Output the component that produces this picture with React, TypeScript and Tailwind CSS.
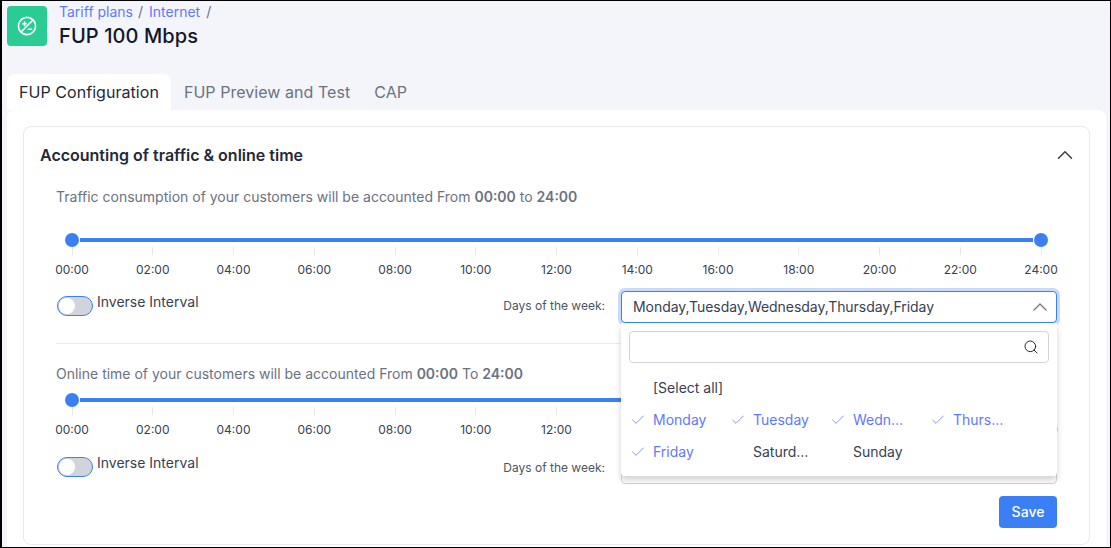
import { Check, ChevronUp, Search } from 'lucide-react';

const hours = ['00:00', '02:00', '04:00', '06:00', '08:00', '10:00', '12:00', '14:00', '16:00', '18:00', '20:00', '22:00', '24:00'];
const days = [
  { name: 'Monday', on: true },
  { name: 'Tuesday', on: true },
  { name: 'Wednesday', on: true },
  { name: 'Thursday', on: true },
  { name: 'Friday', on: true },
  { name: 'Saturday', on: false },
  { name: 'Sunday', on: false },
];

function TimeSlider() {
  return (
    <div className="px-4">
      <div className="relative h-[14px]">
        <div className="absolute left-[8px] right-[8px] top-[5px] h-1 bg-[#3b7ff5]" />
        <div className="absolute left-[-7px] top-0 h-[14px] w-[14px] rounded-full bg-[#3b7ff5]" />
        <div className="absolute right-[-7px] top-0 h-[14px] w-[14px] rounded-full bg-[#3b7ff5]" />
      </div>
      <div className="flex justify-between">
        {hours.map(h => (
          <div key={h} className="flex w-0 flex-col items-center">
            <div className="h-[8px] w-px shrink-0 bg-[#e5e7eb]" />
            <div className="mt-[7px] text-xs leading-4 text-[#374151]">{h}</div>
          </div>
        ))}
      </div>
    </div>
  );
}

function OptionsRow({ daysClass }: { daysClass: string }) {
  return (
    <div className="flex items-center justify-between">
      <div className="mb-[2px] flex items-start">
        <div className="ml-px flex h-5 w-9 items-center rounded-full border border-[#3b7ff5] bg-[#d1d5db] px-px">
          <div className="h-4 w-4 rounded-full bg-white" />
        </div>
        <span className="-mt-[2px] ml-1 text-sm leading-4 text-[#374151]">Inverse Interval</span>
      </div>
      <div className="flex items-center">
        <span className={`mr-4 text-xs text-[#4b5563] ${daysClass}`}>Days of the week:</span>
        <div className="h-8 w-[436px] rounded border border-[#d1d5db] bg-white" />
      </div>
    </div>
  );
}

export default function App() {
  return (
    <div className="relative h-[548px] w-[1111px] overflow-hidden border border-l-2 border-black bg-[#f4f5fb] font-['Inter',sans-serif]">
      <div className="flex items-start pl-[5px] pt-[5px]">
        <div className="flex h-10 w-10 items-center justify-center rounded bg-[#2bcc94]">
          <svg width="22" height="22" viewBox="0 0 22 22" fill="none" stroke="white" strokeWidth="1.6" strokeLinecap="round">
            <circle cx="11" cy="11" r="8.6" />
            <path d="M5 17 17 5" />
            <path d="M6.8 8.8h3.4M8.5 7.1v3.4" />
            <path d="M12.4 14.2h3.2" />
          </svg>
        </div>
        <div className="-mt-px ml-3">
          <div className="flex h-[14px] items-center text-sm text-[#6478f5]">
            <span>Tariff plans</span>
            <span className="ml-[5px] mr-[6px] text-[#6b7280]">/</span>
            <span>Internet</span>
            <span className="mx-[6px] text-[#6b7280]">/</span>
          </div>
          <div className="mt-[3px] text-xl font-medium leading-7 tracking-[0.1px] text-[#111827]">FUP 100 Mbps</div>
        </div>
      </div>

      <div className="ml-[5px] mt-[24px] flex h-9 items-center text-base tracking-[0.05px]">
        <div className="flex h-9 items-center rounded-t-lg bg-white px-3 text-[#1f2937]">FUP Configuration</div>
        <div className="ml-[13px] text-[#6b7280]">FUP Preview and Test</div>
        <div className="ml-6 text-[#6b7280]">CAP</div>
      </div>

      <div className="ml-[5px] h-[500px] w-[1099px] rounded-t-lg bg-white px-4 pt-4">
        <div className="h-[419px] w-[1067px] rounded-lg border border-[#e9eaee] px-8">
          <div className="-mx-4 mb-[5px] flex h-[55px] items-center justify-between">
            <span className="text-base font-semibold text-[#1f2937]">Accounting of traffic &amp; online time</span>
            <ChevronUp size={26} strokeWidth={1.4} className="-mr-[5px] text-[#374151]" />
          </div>

          <div className="text-sm leading-5 text-[#6b7280]">
            Traffic consumption of your customers will be accounted From <b className="font-semibold">00:00</b> to <b className="font-semibold">24:00</b>
          </div>
          <div className="mt-[26px]">
            <TimeSlider />
          </div>
          <div className="mt-[13px]">
            <OptionsRow daysClass="mb-[3px]" />
          </div>
          <div className="mt-5 border-t border-[#e9eaee]" />

          <div className="mt-5 text-sm leading-5 text-[#6b7280]">
            Online time of your customers will be accounted From <b className="font-semibold">00:00</b> To <b className="font-semibold">24:00</b>
          </div>
          <div className="mt-[9px]">
            <TimeSlider />
          </div>
          <div className="mt-[14px]">
            <OptionsRow daysClass="mb-px" />
          </div>
          <div className="mt-3 flex justify-end">
            <button className="h-8 w-[58px] rounded bg-[#3b7ff5] text-sm font-medium text-white">Save</button>
          </div>
        </div>
      </div>

      {/* open select with its dropdown, over the page */}
      <div className="absolute left-[619px] top-[290px] w-[436px]">
        <div className="flex h-8 items-center justify-between rounded border border-[#3b7ff5] bg-white pl-[11px] pr-1 text-sm tracking-[-0.05px] text-[#374151] shadow-[0_0_0_3px_#c9dbfb]">
          <span>Monday,Tuesday,Wednesday,Thursday,Friday</span>
          <ChevronUp size={24} strokeWidth={1.2} className="text-[#6b7280]" />
        </div>
        <div className="relative h-[153px] rounded-b bg-white p-2 shadow-[0_4px_6px_rgba(0,0,0,0.18)]">
          <div className="flex h-8 items-center justify-end rounded border border-[#d1d5db] pr-[9px]">
            <Search size={16} strokeWidth={1.5} className="text-[#1f2937]" />
          </div>
          <div className="mt-[9px] flex h-8 items-center pl-6 text-sm text-[#374151]">[Select all]</div>
          <div className="flex flex-wrap">
            {days.map(d => (
              <div key={d.name} className={`flex h-8 w-[100px] items-center text-sm ${d.on ? 'text-[#6478f5]' : 'text-[#374151]'}`}>
                <div className="flex w-6 shrink-0 items-center">
                  {d.on && <Check size={16} strokeWidth={1.2} className="ml-px text-[#6478f5]" />}
                </div>
                <span className="w-[56px] truncate">{d.name}</span>
              </div>
            ))}
          </div>
        </div>
      </div>
    </div>
  );
}
